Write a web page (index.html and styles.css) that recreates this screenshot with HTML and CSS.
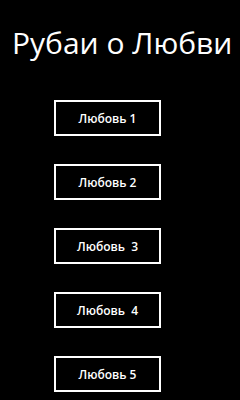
FILE: index.html
```html
<!DOCTYPE html>
<html>
<head>
<meta charset="utf-8">
<link rel="stylesheet" href="styles.css">
</head>
<body>
<div class="page">
  <h1 class="title">Рубаи о Любви</h1>
  <div class="list">
    <div class="btn">Любовь 1</div>
    <div class="btn">Любовь 2</div>
    <div class="btn">Любовь&nbsp; 3</div>
    <div class="btn">Любовь&nbsp; 4</div>
    <div class="btn">Любовь 5</div>
  </div>
</div>
</body>
</html>
```
FILE: styles.css
```css
html, body {
  margin: 0;
  padding: 0;
  background: #000;
  color: #fff;
  font-family: "Open Sans", "Noto Sans", sans-serif;
}
.page {
  width: 240px;
  height: 400px;
  overflow: hidden;
}
.title {
  margin: 0;
  padding: 23px 0 0 12px;
  font-size: 30px;
  font-weight: 400;
  line-height: 40px;
  white-space: nowrap;
}
.list {
  display: flex;
  flex-direction: column;
  gap: 28px;
  margin: 37px 0 0 54px;
}
.btn {
  box-sizing: border-box;
  width: 107px;
  height: 36px;
  border: 2px solid #fff;
  display: flex;
  align-items: center;
  justify-content: center;
  font-size: 12px;
  font-weight: 600;
  padding-top: 1px;
}
```
